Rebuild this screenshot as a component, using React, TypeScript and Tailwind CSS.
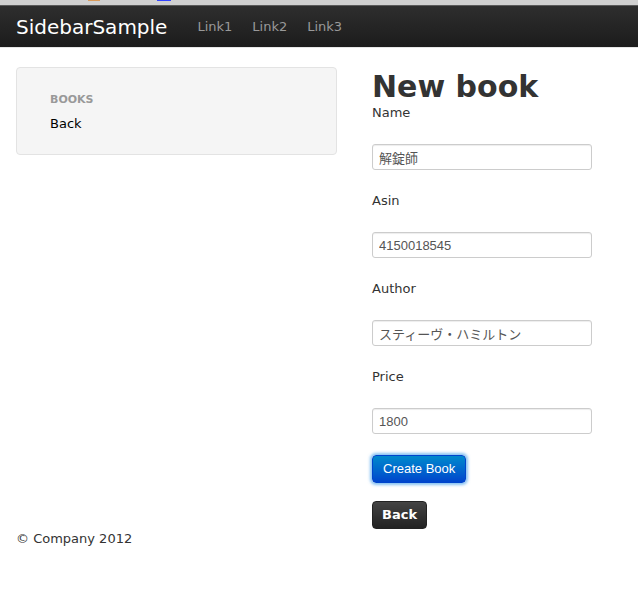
import React from "react";

const fields = [
  { label: "Name", value: "解錠師" },
  { label: "Asin", value: "4150018545" },
  { label: "Author", value: "スティーヴ・ハミルトン" },
  { label: "Price", value: "1800" },
];

export default function App() {
  return (
    <div className="min-h-[604px] w-[638px] bg-white font-['DejaVu_Sans',sans-serif] text-[13px] leading-[18px] text-[#333]">
      {/* browser strip */}
      <div className="relative h-[5px] bg-[#d0d0d0]">
        <div className="absolute left-[88px] top-0 h-[1px] w-[12px] bg-[#d89a5a]" />
        <div className="absolute left-[157px] top-0 h-[1px] w-[14px] bg-[#3344ff]" />
      </div>
      <div className="h-[1px] bg-[#5a5a5a]" />

      {/* Navbar */}
      <div className="flex h-[41px] items-center bg-gradient-to-b from-[#2e2e2e] to-[#1c1c1c] px-4">
        <a className="mr-[30px] text-[20px] text-white">SidebarSample</a>
        <nav className="flex gap-5 text-[13px] text-[#999]">
          <a>Link1</a>
          <a>Link2</a>
          <a>Link3</a>
        </nav>
      </div>
      <div className="h-[1px] bg-[#e6e6e6]" />

      <div className="flex px-4 pt-[19px]">
        {/* Sidebar */}
        <div className="w-[321px] shrink-0">
          <div className="rounded-[4px] border border-[#e3e3e3] bg-[#f5f5f5] pb-[21px] pl-[33px] pt-[23px]">
            <div className="text-[11px] font-bold uppercase text-[#999]">Books</div>
            <div className="mt-[6px] text-black">Back</div>
          </div>
        </div>

        {/* Main */}
        <div className="ml-[35px] flex flex-col">
          <h1 className="-mb-[1px] pt-[2px] text-[30px] font-bold leading-[36px] text-[#333]">New book</h1>
          {fields.map((f) => (
            <div key={f.label} className="flex flex-col">
              <label>{f.label}</label>
              <input
                readOnly
                value={f.value}
                className="mb-[22px] mt-[22px] h-[26px] w-[220px] rounded-[3px] border border-[#ccc] px-[6px] font-['Liberation_Sans','Noto_Sans_CJK_JP',sans-serif] text-[13px] text-[#555] shadow-[inset_0_1px_1px_rgba(0,0,0,0.075)] outline-none"
              />
            </div>
          ))}
          <div className="mt-[-1px]">
            <button className="h-[28px] whitespace-nowrap rounded-[4px] border border-[#0044cc] bg-gradient-to-b from-[#0088cc] to-[#0044cc] px-[10px] font-['Liberation_Sans',sans-serif] text-[13px] text-white shadow-[0_0_3px_2px_rgba(82,168,236,0.7)]">
              Create Book
            </button>
          </div>
          <div className="mt-[18px]">
            <button className="h-[28px] whitespace-nowrap rounded-[4px] border border-[#222] bg-gradient-to-b from-[#444] to-[#222] px-[9px] text-[13px] font-bold text-white">
              Back
            </button>
          </div>
        </div>
      </div>

      <footer className="px-4 pt-[1px] text-[13px] text-[#333]">© Company 2012</footer>
    </div>
  );
}
